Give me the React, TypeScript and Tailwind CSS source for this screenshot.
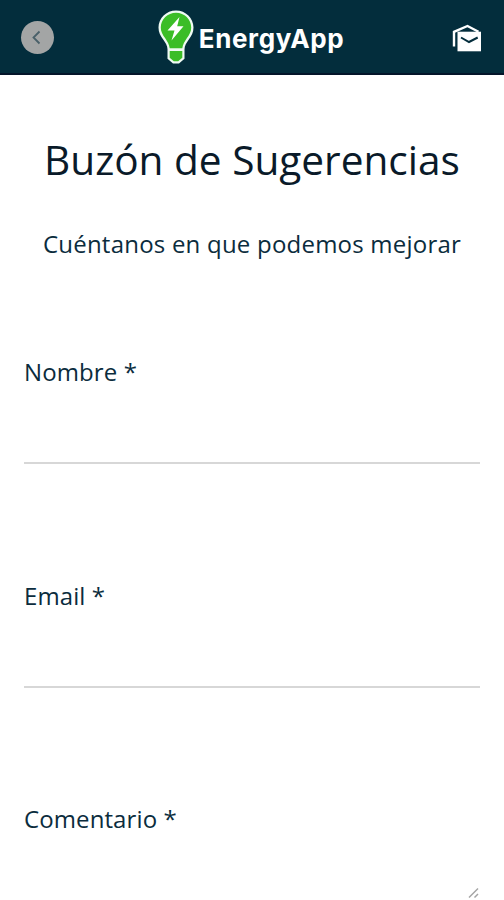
import React, { useState } from 'react';

interface FieldProps {
  label: string;
  type: string;
  value: string;
  onChange: (value: string) => void;
}

const Logo: React.FC = () => (
  <div className="mr-[4px] flex items-start">
    <svg width="36" height="54" viewBox="0 0 36 54" fill="none">
      <path
        d="M18 .5C8.300.5.5 8.200.5 17.600c0 5 2 8.400 4.700 12 2.300 3.300 4.300 6.200 4.300 9.600v9.500l5.500 4.800h6l5.500-4.800v-9.500c0-3.400 2-6.300 4.300-9.600 2.700-3.600 4.700-7 4.700-12C35.500 8.200 27.700.5 18 .5z"
        fill="#effaf3"
      />
      <path
        d="M18 2.800C9.600 2.800 2.800 9.400 2.800 17.600c0 4.200 1.800 7.200 4.400 10.700 2.200 3.200 4 6.400 4.500 10h12.600c.5-3.600 2.300-6.800 4.500-10 2.600-3.500 4.400-6.500 4.400-10.700C33.200 9.400 26.400 2.800 18 2.800z"
        fill="#3bbd27"
      />
      <path d="M11.700 41h12.600v6.700l-4.100 3.600h-4.400l-4.100-3.600z" fill="#3bbd27" />
      <path d="M21.500 7 9.500 20.500h7L13.500 30.500l12-14.300h-6.300z" fill="#fff" />
    </svg>
    <span className="ml-[5px] mt-[13px] font-[Inter] text-[26px] leading-[32px] font-bold tracking-[0.6px] text-white">
      EnergyApp
    </span>
  </div>
);

const MailboxIcon: React.FC = () => (
  <svg width="30" height="28" viewBox="0 0 30 28" fill="none">
    <path d="M2 22.500V7.800L15.500 2l11 5.800" stroke="#fff" strokeWidth="2.400" />
    <path d="M5.500 7.700H29v19.600H5.500z" fill="#fff" />
    <path d="m9 13.500 8 4.500 8.700-4.500" stroke="#032d3c" strokeWidth="2" />
  </svg>
);

const Field: React.FC<FieldProps> = ({ label, type, value, onChange }) => (
  <label className="block h-[223.500px]">
    <span className="block text-[24px] leading-[34px] tracking-[0.1px]">{label} *</span>
    <input
      type={type}
      value={value}
      onChange={(e) => onChange(e.target.value)}
      className="block h-[75px] w-full border-b-2 border-[#d7d7d7] bg-transparent text-[24px] outline-none"
    />
  </label>
);

export default function App() {
  const [name, setName] = useState('');
  const [email, setEmail] = useState('');
  const [comment, setComment] = useState('');

  return (
    <div className="h-[900px] w-full overflow-hidden bg-white font-['Open_Sans',sans-serif] text-[#0b2c3d]">
      <header className="flex h-[75px] items-start justify-between border-b-2 border-[#04152a] bg-[#032d3c] pt-[10px] pr-[22px] pl-[21px]">
        <button className="mt-[11px] flex size-[33px] items-center justify-center rounded-full bg-[#a3a5a5]">
          <svg width="33" height="33" viewBox="0 0 33 33" fill="none">
            <path d="m18.500 10.500-6 6 6 6" stroke="#496069" strokeWidth="1.800" />
          </svg>
        </button>
        <Logo />
        <button className="mt-[14px]">
          <MailboxIcon />
        </button>
      </header>

      <main className="px-[24px]">
        <div className="text-center">
          <h1 className="pt-[57px] text-[40.600px] leading-[56px] whitespace-nowrap text-[#0a1a29]">Buzón de Sugerencias</h1>
          <p className="mt-[39px] text-[24px] leading-[34px] tracking-[0.22px] whitespace-nowrap">Cuéntanos en que podemos mejorar</p>
        </div>

        <form className="mt-[94px]">
          <Field label="Nombre" type="text" value={name} onChange={setName} />
          <Field label="Email" type="email" value={email} onChange={setEmail} />
          <label className="block">
            <span className="block text-[24px] leading-[34px] tracking-[0.1px]">Comentario *</span>
            <span className="relative block h-[63px]">
              <textarea
                value={comment}
                onChange={(e) => setComment(e.target.value)}
                className="block size-full resize-none text-[24px] outline-none"
              />
              <svg className="absolute right-0 bottom-0" width="12" height="12" viewBox="0 0 12 12">
                <path d="m1 10.500 9-9M6.500 10.500l3.500-3.500" stroke="#a5a5a5" strokeWidth="1.500" />
              </svg>
            </span>
          </label>
        </form>
      </main>
    </div>
  );
}
